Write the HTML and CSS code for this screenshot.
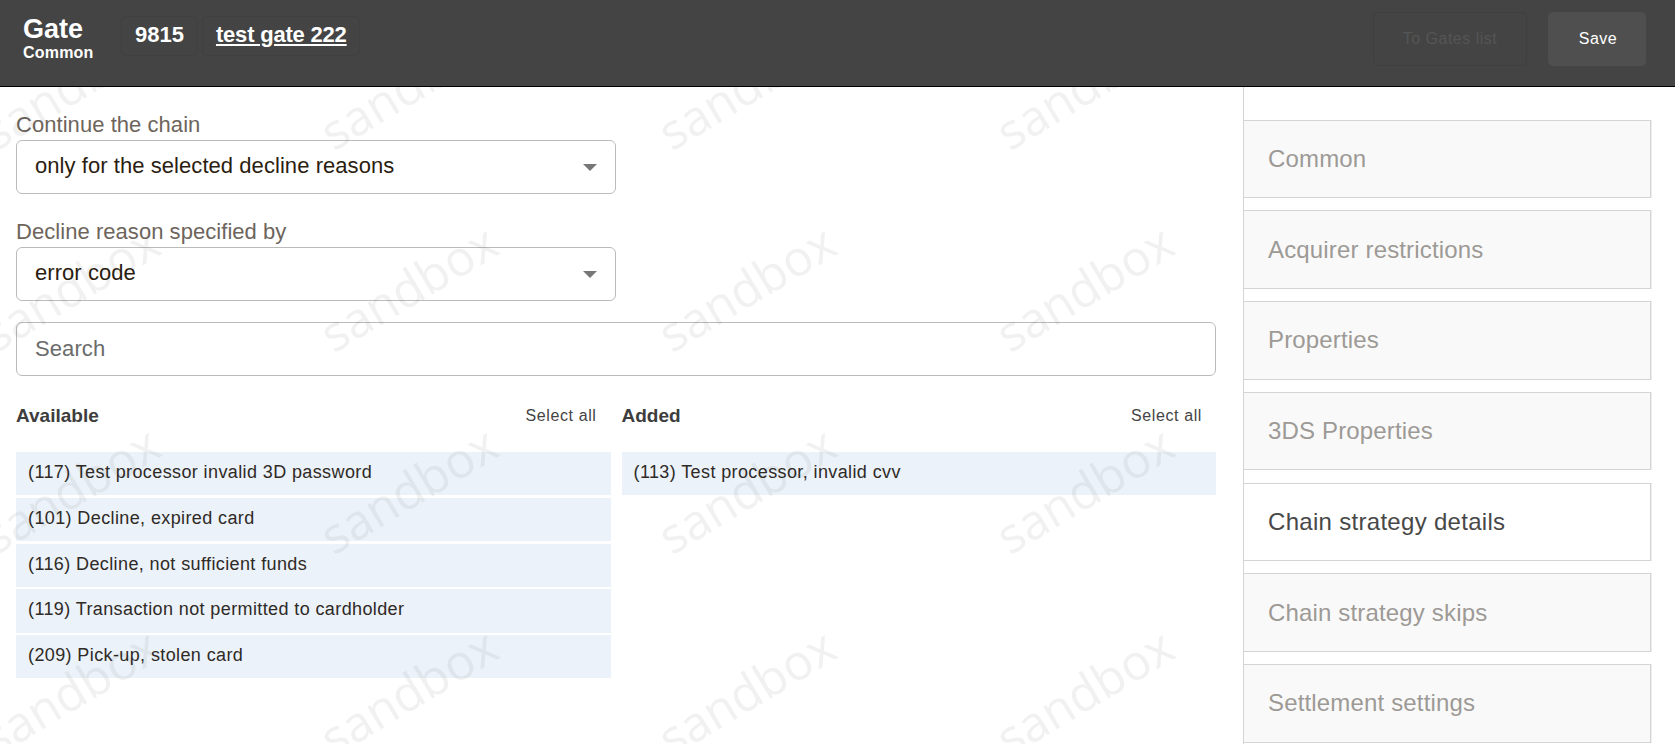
FILE: index.html
```html
<!DOCTYPE html>
<html lang="en">
<head>
<meta charset="utf-8">
<title>Gate</title>
<link rel="stylesheet" href="styles.css">
</head>
<body>
<header class="topbar">
  <div class="brand">
    <div class="brand-title">Gate</div>
    <div class="brand-sub">Common</div>
  </div>
  <div class="chip">9815</div>
  <div class="chip"><a class="chip-link" href="#">test gate 222</a></div>
  <div class="topbar-actions">
    <button class="btn btn-ghost" type="button">To Gates list</button>
    <button class="btn btn-save" type="button">Save</button>
  </div>
</header>
<div class="page">
  <main class="main">
    <div class="field">
      <div class="field-label">Continue the chain</div>
      <div class="select"><span>only for the selected decline reasons</span><i class="caret"></i></div>
    </div>
    <div class="field">
      <div class="field-label">Decline reason specified by</div>
      <div class="select"><span>error code</span><i class="caret"></i></div>
    </div>
    <input class="search" type="text" placeholder="Search">
    <div class="columns">
      <section class="column">
        <div class="column-head"><strong class="column-title">Available</strong><span class="select-all">Select all</span></div>
        <div class="row">(117) Test processor invalid 3D password</div>
        <div class="row">(101) Decline, expired card</div>
        <div class="row">(116) Decline, not sufficient funds</div>
        <div class="row">(119) Transaction not permitted to cardholder</div>
        <div class="row">(209) Pick-up, stolen card</div>
      </section>
      <section class="column">
        <div class="column-head"><strong class="column-title">Added</strong><span class="select-all">Select all</span></div>
        <div class="row">(113) Test processor, invalid cvv</div>
      </section>
    </div>
    <svg class="watermark" aria-hidden="true" width="100%" height="100%">
      <defs>
        <pattern id="wm" x="-96" y="104" width="338" height="202" patternUnits="userSpaceOnUse">
          <text class="watermark-text" x="169" y="101" text-anchor="middle" dominant-baseline="middle" transform="rotate(-31 169 101)">sandbox</text>
        </pattern>
      </defs>
      <rect width="100%" height="100%" fill="url(#wm)"></rect>
    </svg>
  </main>
  <nav class="sidebar">
    <a class="tab" href="#">Common</a>
    <a class="tab" href="#">Acquirer restrictions</a>
    <a class="tab" href="#">Properties</a>
    <a class="tab" href="#">3DS Properties</a>
    <a class="tab tab-active" href="#">Chain strategy details</a>
    <a class="tab" href="#">Chain strategy skips</a>
    <a class="tab" href="#">Settlement settings</a>
  </nav>
</div>
</body>
</html>
```

FILE: styles.css
```css
* { box-sizing: border-box; }

html, body {
  margin: 0;
  height: 100%;
  overflow: hidden;
}

body {
  font-family: "Liberation Sans", Arial, sans-serif;
  background: #fff;
  color: #333;
}

.topbar {
  display: flex;
  align-items: flex-start;
  height: 87px;
  padding: 12px 29px 0 23px;
  background: #444;
  border-bottom: 1px solid #000;
}

.brand {
  width: 98px;
  color: #fff;
  font-weight: 700;
}

.brand-title {
  font-size: 27px;
  line-height: 31px;
  margin-top: 2px;
}

.brand-sub {
  font-size: 16px;
  line-height: 16px;
  letter-spacing: 0.2px;
}

.chip {
  height: 40px;
  margin: 4px 5px 0 0;
  padding: 0 12px 0 13px;
  border: 1px solid #404040;
  border-radius: 5px;
  color: #fff;
  font-size: 22px;
  font-weight: 700;
  line-height: 36px;
}

.chip-link {
  color: #fff;
  letter-spacing: -0.2px;
}

.topbar-actions {
  display: flex;
  gap: 21px;
  margin-left: auto;
}

.btn {
  height: 54px;
  border-radius: 5px;
  font-family: inherit;
  font-size: 16px;
  letter-spacing: 0.5px;
}

.btn-ghost {
  width: 154px;
  background: #444;
  border: 1px solid #3f3f3f;
  color: #555;
}

.btn-save {
  width: 98px;
  padding-left: 8px;
  background: #4f4f4f;
  border: 0;
  color: #fff;
}

.page {
  display: flex;
  height: 657px;
}

.main {
  position: relative;
  width: 1243px;
  padding: 21px 27px 0 16px;
  overflow: hidden;
}

.field {
  margin-bottom: 21px;
}

.field-label {
  height: 32px;
  padding-top: 1px;
  color: #6d655c;
  font-size: 22px;
  line-height: 32px;
  letter-spacing: 0.05px;
}

.select {
  display: flex;
  align-items: center;
  justify-content: space-between;
  width: 600px;
  height: 54px;
  padding: 0 18px 2px 18px;
  border: 1px solid #bbb;
  border-radius: 6px;
  background: #fff;
  color: #2b1d10;
  font-size: 22px;
  letter-spacing: 0.06px;
}

.caret {
  width: 0;
  height: 0;
  margin-top: 2px;
  border-left: 7px solid transparent;
  border-right: 7px solid transparent;
  border-top: 7px solid #777;
}

.search {
  display: block;
  width: 100%;
  height: 54px;
  padding: 0 18px;
  border: 1px solid #bbb;
  border-radius: 6px;
  background: #fff;
  font-family: inherit;
  font-size: 22px;
  letter-spacing: 0.1px;
}

.search::placeholder {
  color: #6b6b6b;
  opacity: 1;
}

.columns {
  display: flex;
  gap: 11px;
  margin-top: 22px;
}

.column {
  flex: 1 1 0;
}

.column-head {
  display: flex;
  align-items: center;
  justify-content: space-between;
  height: 34px;
  margin-bottom: 20px;
  padding: 1px 14px 0 0;
}

.column-title {
  color: #3d3d3d;
  font-size: 19px;
}

.select-all {
  color: #444;
  font-size: 16px;
  letter-spacing: 0.6px;
}

.row {
  height: 43.2px;
  margin-bottom: 2.6px;
  padding-left: 12px;
  background: #ebf2f9;
  color: #2f2a26;
  font-size: 18px;
  line-height: 40px;
  letter-spacing: 0.39px;
}

.watermark {
  position: absolute;
  top: 0;
  left: 0;
  pointer-events: none;
}

.watermark-text {
  font-family: "Open Sans", sans-serif;
  font-size: 49px;
  font-weight: 400;
  fill: rgba(0, 0, 0, 0.055);
}

.sidebar {
  display: flex;
  flex-direction: column;
  width: 432px;
  padding: 32.6px 24px 0 0;
  border-left: 1px solid #d4d4d4;
  background: #fff;
}

.tab {
  display: flex;
  flex: none;
  align-items: center;
  height: 78.5px;
  margin-bottom: 12.25px;
  padding-left: 24px;
  border: 1px solid #d4d4d4;
  border-left: 0;
  box-shadow: 1px 0 0 #eee;
  background: #f9f9f9;
  color: #9d9a96;
  font-size: 24px;
  letter-spacing: 0.16px;
  text-decoration: none;
}

.tab-active {
  background: #fff;
  color: #484848;
  letter-spacing: 0.3px;
}
```
